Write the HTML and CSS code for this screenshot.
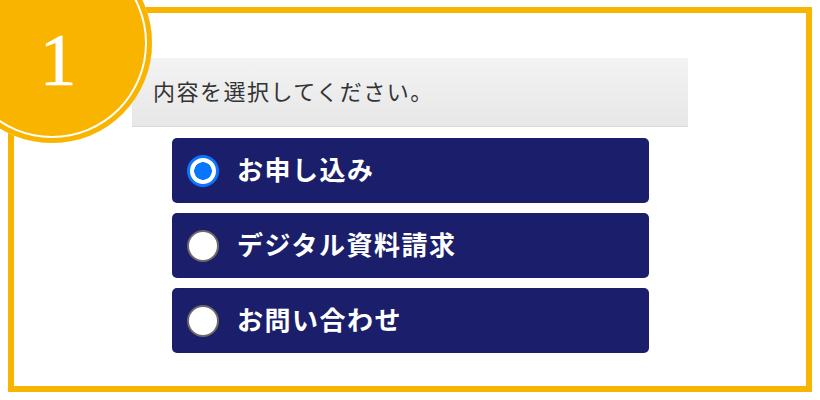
FILE: index.html
```html
<!DOCTYPE html>
<html lang="ja">
<head>
<meta charset="utf-8">
<title>内容を選択</title>
<link rel="stylesheet" href="styles.css">
</head>
<body>
<div class="step-badge"><span class="step-num">1</span></div>
<section class="frame">
  <div class="question">内容を選択してください。</div>
  <div class="options">
    <label class="option"><span class="radio checked"></span><span class="option-text">お申し込み</span></label>
    <label class="option"><span class="radio"></span><span class="option-text">デジタル資料請求</span></label>
    <label class="option"><span class="radio"></span><span class="option-text">お問い合わせ</span></label>
  </div>
</section>
</body>
</html>
```
FILE: styles.css
```css
html, body {
  margin: 0;
  padding: 0;
  background: #fff;
  overflow: hidden;
}
body {
  width: 820px;
  height: 400px;
  position: relative;
  font-family: "Noto Sans CJK JP", "Noto Sans", sans-serif;
}
.frame {
  box-sizing: border-box;
  margin: 7px 8px 0 8px;
  width: 804px;
  height: 385px;
  border: 6px solid #f9b400;
  padding: 45px 0 0 118px;
}
.question {
  box-sizing: border-box;
  width: 556px;
  height: 69px;
  background: linear-gradient(#f3f3f3, #e7e7e7);
  border-bottom: 1px solid #d9d9d9;
  display: flex;
  align-items: center;
  padding: 0 0 5px 21px;
  font-size: 22px;
  letter-spacing: 1.5px;
  color: #333;
}
.options {
  margin: 11px 0 0 40px;
  width: 477px;
  display: flex;
  flex-direction: column;
  gap: 10px;
}
.option {
  box-sizing: border-box;
  height: 65px;
  background: #1b1f6b;
  border-radius: 5px;
  display: flex;
  align-items: center;
  padding: 0 0 0 15px;
  gap: 18px;
}
.radio {
  box-sizing: border-box;
  width: 32px;
  height: 32px;
  border-radius: 50%;
  background: #fff;
  border: 2px solid #6e6a66;
  flex: none;
}
.radio.checked {
  border: 3px solid #0a75ff;
  background: radial-gradient(circle, #0a75ff 0 8.5px, #fff 9px);
}
.option-text {
  color: #fff;
  font-weight: 700;
  font-size: 26px;
  letter-spacing: 1.5px;
  line-height: 1;
  padding-bottom: 3px;
}
.step-badge {
  position: absolute;
  left: -48px;
  top: -57px;
  width: 200px;
  height: 200px;
  border-radius: 50%;
  background: #f9b400;
  box-shadow: inset 0 0 0 5px #f9b400, inset 0 0 0 7px #fff;
  display: flex;
  align-items: center;
  justify-content: center;
}
.step-num {
  font-family: "Liberation Serif", serif;
  font-size: 74px;
  font-weight: 400;
  -webkit-text-stroke: 0.6px #fff;
  color: #fff;
  line-height: 1;
  margin: 33px 0 0 12px;
}
```
